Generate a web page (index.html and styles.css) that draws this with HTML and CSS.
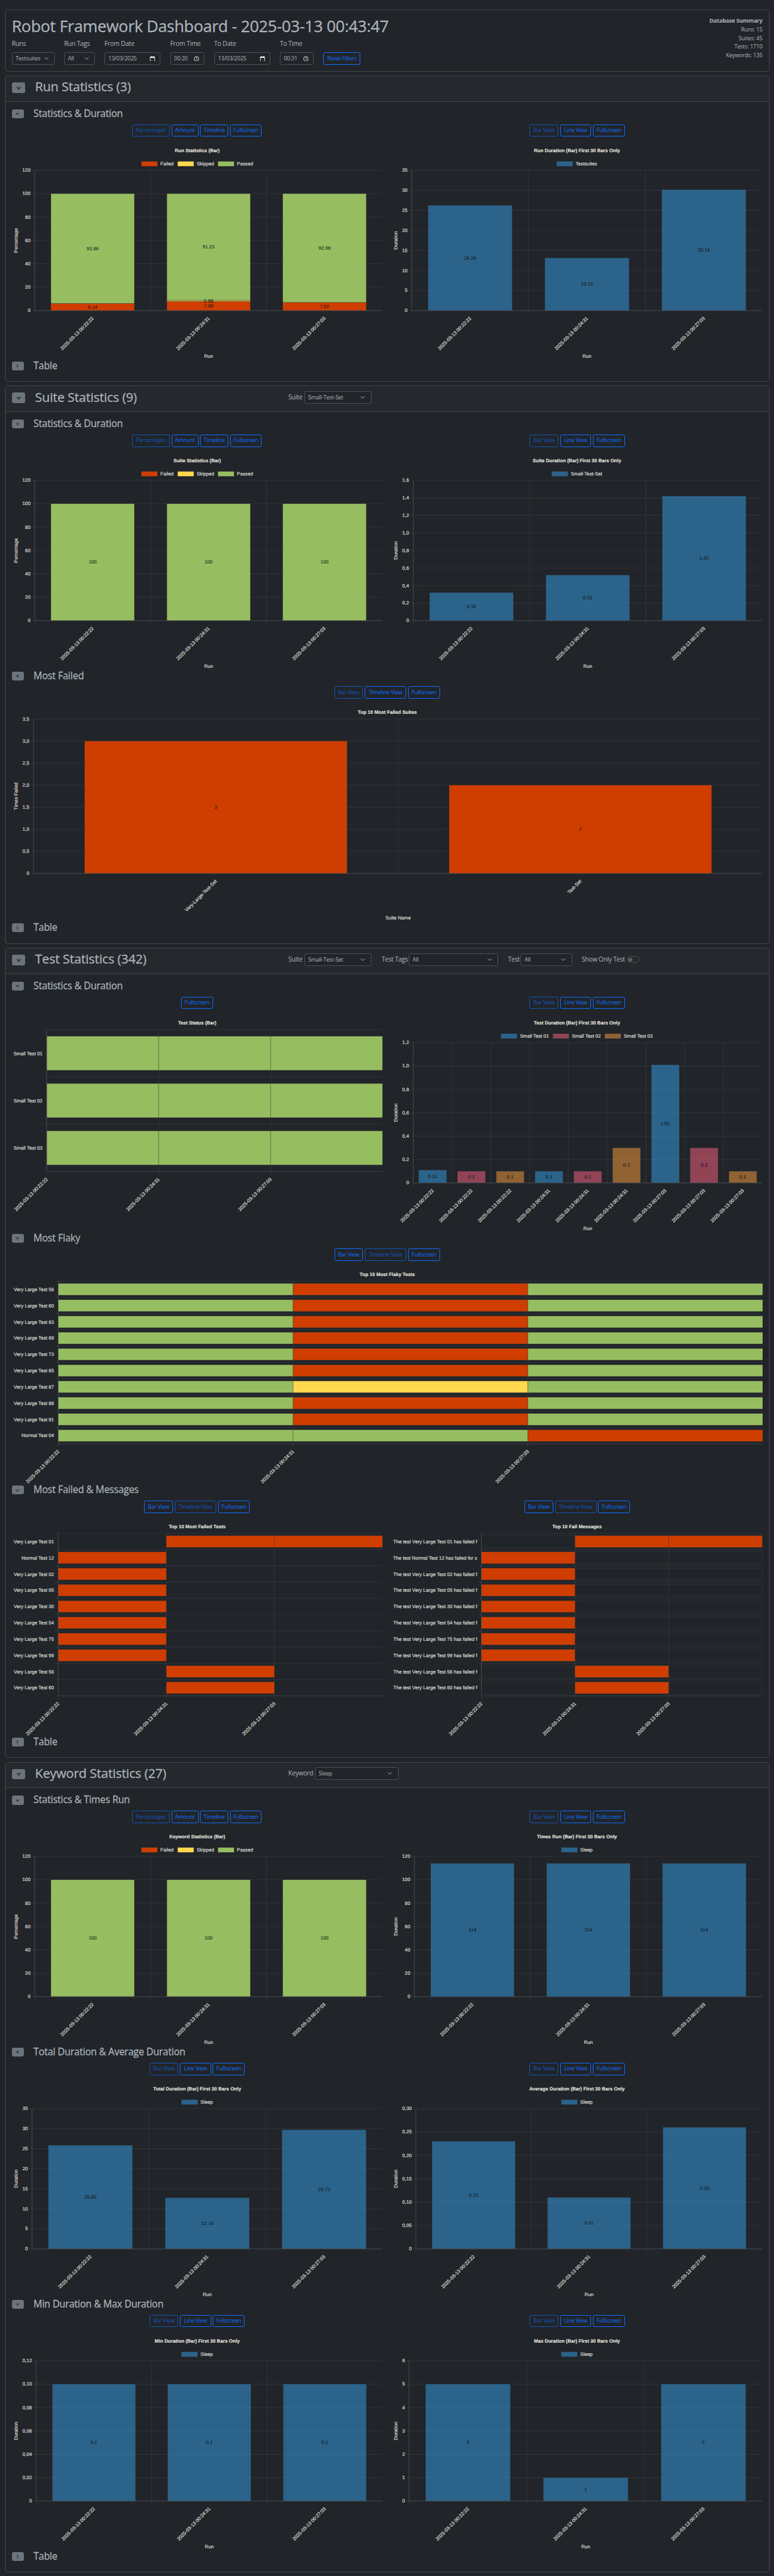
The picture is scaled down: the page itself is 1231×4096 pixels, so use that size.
FILE: index.html
```html
<!DOCTYPE html>
<html lang="en">
<head>
<meta charset="utf-8">
<title>Robot Framework Dashboard</title>
<link rel="stylesheet" href="styles.css">
</head>
<body>
<svg class="defs" width="0" height="0">
  <symbol id="down" viewBox="0 0 16 16"><path d="M3.5 4.5 8 11.5l4.500-7" fill="none" stroke="currentColor" stroke-width="1.700"/></symbol>
  <symbol id="right" viewBox="0 0 16 16"><path d="M5.500 2.500 10 8l-4.500 5.500" fill="none" stroke="currentColor" stroke-width="1.700"/></symbol>
  <symbol id="caret" viewBox="0 0 16 16"><path d="m2 5 6 6 6-6" fill="none" stroke="currentColor" stroke-width="2" stroke-linecap="round" stroke-linejoin="round"/></symbol>
  <symbol id="cal" viewBox="0 0 16 16"><path d="M2 2.500h12v12.500H2z" fill="none" stroke="#fff" stroke-width="1.500"/><path d="M2 2h12v3.500H2zM4 .5h1.500V3H4zM10.500.5H12V3h-1.500z" fill="#fff"/></symbol>
  <symbol id="clock" viewBox="0 0 16 16"><circle cx="8" cy="8" r="6.500" fill="none" stroke="#fff" stroke-width="1.500"/><path d="M8 3.500V8l3 2.500" fill="none" stroke="#fff" stroke-width="1.400"/></symbol>
</svg>
<div class="page">
  <header class="card top">
    <div class="filters">
      <h1>Robot Framework Dashboard - 2025-03-13 00:43:47</h1>
      <div class="fields">
        <div class="field w-runs"><label>Runs</label><div class="select">Testsuites<svg><use href="#caret"/></svg></div></div>
        <div class="field w-tags"><label>Run Tags</label><div class="select">All<svg><use href="#caret"/></svg></div></div>
        <div class="field w-date"><label>From Date</label><div class="select">13/03/2025<svg class="pick"><use href="#cal"/></svg></div></div>
        <div class="field w-time"><label>From Time</label><div class="select">00:20<svg class="pick"><use href="#clock"/></svg></div></div>
        <div class="field w-date"><label>To Date</label><div class="select">13/03/2025<svg class="pick"><use href="#cal"/></svg></div></div>
        <div class="field w-time2"><label>To Time</label><div class="select">00:31<svg class="pick"><use href="#clock"/></svg></div></div>
        <button class="btn w-reset">Reset Filters</button>
      </div>
    </div>
    <div class="summary"><b>Database Summary</b><span>Runs: 15</span><span>Suites: 45</span><span>Tests: 1710</span><span>Keywords: 135</span></div>
  </header>

  <section class="card">
    <div class="card-head"><i class="toggle"><svg><use href="#down"/></svg></i><h2>Run Statistics (3)</h2></div>
    <div class="group">
      <div class="sub"><i class="toggle"><svg><use href="#down"/></svg></i><h3>Statistics &amp; Duration</h3></div>
      <div class="row"><div class="col" data-chart="runStats"></div><div class="col" data-chart="runDuration"></div></div>
    </div>
    <div class="sub"><i class="toggle"><svg><use href="#right"/></svg></i><h3>Table</h3></div>
  </section>

  <section class="card">
    <div class="card-head"><i class="toggle"><svg><use href="#down"/></svg></i><h2>Suite Statistics (9)</h2>
      <div class="controls"><label class="l-suite">Suite</label><div class="select s-suite">Small-Test-Set<svg><use href="#caret"/></svg></div></div>
    </div>
    <div class="group">
      <div class="sub"><i class="toggle"><svg><use href="#down"/></svg></i><h3>Statistics &amp; Duration</h3></div>
      <div class="row"><div class="col" data-chart="suiteStats"></div><div class="col" data-chart="suiteDuration"></div></div>
    </div>
    <div class="group">
      <div class="sub"><i class="toggle"><svg><use href="#down"/></svg></i><h3>Most Failed</h3></div>
      <div class="row"><div class="col" data-chart="suiteFailed"></div></div>
    </div>
    <div class="sub"><i class="toggle"><svg><use href="#right"/></svg></i><h3>Table</h3></div>
  </section>

  <section class="card">
    <div class="card-head"><i class="toggle"><svg><use href="#down"/></svg></i><h2>Test Statistics (342)</h2>
      <div class="controls"><label class="l-suite">Suite</label><div class="select s-suite">Small-Test-Set<svg><use href="#caret"/></svg></div>
        <label class="l-tags">Test Tags</label><div class="select s-tags">All<svg><use href="#caret"/></svg></div>
        <label class="l-test">Test</label><div class="select s-test">All<svg><use href="#caret"/></svg></div>
        <label class="l-only">Show Only Test</label><span class="switch"></span></div>
    </div>
    <div class="group">
      <div class="sub"><i class="toggle"><svg><use href="#down"/></svg></i><h3>Statistics &amp; Duration</h3></div>
      <div class="row"><div class="col" data-chart="testStatus"></div><div class="col" data-chart="testDuration"></div></div>
    </div>
    <div class="group">
      <div class="sub"><i class="toggle"><svg><use href="#down"/></svg></i><h3>Most Flaky</h3></div>
      <div class="row"><div class="col" data-chart="flaky"></div></div>
    </div>
    <div class="group">
      <div class="sub"><i class="toggle"><svg><use href="#down"/></svg></i><h3>Most Failed &amp; Messages</h3></div>
      <div class="row"><div class="col" data-chart="testFailed"></div><div class="col" data-chart="messages"></div></div>
    </div>
    <div class="sub"><i class="toggle"><svg><use href="#right"/></svg></i><h3>Table</h3></div>
  </section>

  <section class="card">
    <div class="card-head"><i class="toggle"><svg><use href="#down"/></svg></i><h2>Keyword Statistics (27)</h2>
      <div class="controls"><label class="l-keyword">Keyword</label><div class="select s-keyword">Sleep<svg><use href="#caret"/></svg></div></div>
    </div>
    <div class="group">
      <div class="sub"><i class="toggle"><svg><use href="#down"/></svg></i><h3>Statistics &amp; Times Run</h3></div>
      <div class="row"><div class="col" data-chart="keywordStats"></div><div class="col" data-chart="timesRun"></div></div>
    </div>
    <div class="group">
      <div class="sub"><i class="toggle"><svg><use href="#down"/></svg></i><h3>Total Duration &amp; Average Duration</h3></div>
      <div class="row"><div class="col" data-chart="totalDuration"></div><div class="col" data-chart="avgDuration"></div></div>
    </div>
    <div class="group">
      <div class="sub"><i class="toggle"><svg><use href="#down"/></svg></i><h3>Min Duration &amp; Max Duration</h3></div>
      <div class="row"><div class="col" data-chart="minDuration"></div><div class="col" data-chart="maxDuration"></div></div>
    </div>
    <div class="sub"><i class="toggle"><svg><use href="#right"/></svg></i><h3>Table</h3></div>
  </section>
</div>
<script src="charts.js"></script>
</body>
</html>
```
FILE: styles.css
```css
html { background: #212429; }
body { margin: 0; background: #212429; color: #adb5bd; }
* { box-sizing: border-box; }
.defs { position: absolute; }

.page {
  zoom: 0.6413;
  width: 1920px;
  height: 6387px;
  padding: 24px 12px 0;
  overflow: hidden;
  font: 16px/24px "Open Sans", "Noto Sans", sans-serif;
}
label { letter-spacing: -0.031em; }
h1, h2, h3 { margin: 0; font-weight: 500; white-space: nowrap; letter-spacing: -0.012em; -webkit-text-stroke: 0.4px currentColor; }

.card {
  width: 1896px;
  height: 759px;
  margin-bottom: 10px;
  border: 1px solid #424649;
  border-radius: 6px;
}
.card:nth-of-type(2) { height: 1384px; }
.card:nth-of-type(3) { height: 2008.6px; }
.card:nth-of-type(4) { height: 2008.6px; }

.top {
  display: flex;
  justify-content: space-between;
  height: 153px;
  padding: 15px 15.5px 0;
}
h1 { font-size: 40px; line-height: 48px; margin: 1px 0 8px; letter-spacing: -0.0136em; }
.fields { display: flex; gap: 24px; align-items: flex-end; height: 63px; }
.field { display: flex; flex-direction: column; }
.field label { height: 33px; line-height: 24px; white-space: nowrap; }
.w-runs { width: 106px; }
.w-tags { width: 76px; }
.w-date { width: 139px; }
.w-time { width: 85px; }
.w-time2 { width: 84px; }
.btn.w-reset { width: 92px; }
.select {
  display: flex;
  align-items: center;
  justify-content: space-between;
  height: 31px;
  padding: 0 13px 0 8px;
  border: 1px solid #495057;
  border-radius: 4px;
  background: #212429;
  font-size: 14px;
  letter-spacing: -0.026em;
  white-space: nowrap;
}
.select svg { width: 12px; height: 12px; flex: none; }
.select svg.pick { width: 14px; height: 14px; margin-right: -2px; }

.summary { display: flex; flex-direction: column; font-size: 14px; line-height: 21.5px; text-align: right; letter-spacing: -0.023em; }

.btn {
  height: 31px;
  padding: 0;
  border: 1px solid #0d6efd;
  border-radius: 4px;
  background: none;
  color: #0d6efd;
  font: 14px/20px "Open Sans", "Noto Sans", sans-serif;
  letter-spacing: -0.034em;
  white-space: nowrap;
}
.btn.off { opacity: 0.65; }

.card-head {
  display: flex;
  align-items: center;
  height: 63.5px;
  margin-bottom: 19px;
  padding: 0 15.5px 4px;
  border-bottom: 1px solid #424649;
  border-radius: 5px 5px 0 0;
  background: #25282d;
}
.card-head .toggle { width: 34px; height: 26px; }
.card-head h2 { width: 628px; margin: -4px 0 0 24px; font-size: 32px; line-height: 40px; }
.toggle {
  display: flex;
  align-items: center;
  justify-content: center;
  flex: none;
  width: 30px;
  height: 22px;
  border-radius: 5px;
  background: #6c757d;
  color: #000;
}
.toggle svg { width: 12px; height: 12px; }
.card-head .toggle svg { width: 15px; height: 15px; }

.controls { display: flex; align-items: center; margin-top: -3px; }
.controls label { white-space: nowrap; }
.l-suite { width: 39.5px; }
.l-tags { width: 67px; margin-left: 25px; }
.l-test { width: 31.5px; margin-left: 24.5px; }
.l-only { width: 112px; margin-left: 24px; }
.l-keyword { width: 65.5px; }
.s-suite { width: 167px; padding-right: 14px; }
.s-tags { width: 222px; padding-right: 14px; }
.s-test { width: 127px; padding-right: 14px; }
.s-keyword { width: 208px; padding-right: 14px; }
.switch { width: 32px; height: 16px; padding: 2px; border: 1px solid #495057; border-radius: 8px; }
.switch::before { content: ""; display: block; width: 10px; height: 10px; border-radius: 50%; background: #5b6064; }

.sub { display: flex; align-items: center; height: 22px; padding: 0 15.5px; }
.sub h3 { margin-left: 24px; font-size: 24px; line-height: 28px; }
.group { height: 624.87px; }
.row { display: flex; gap: 24px; padding: 15px 15.5px 0; }
.col { flex: 1; min-width: 0; }
.buttons { display: flex; justify-content: center; gap: 4.4px; margin-bottom: 8px; }
.Percentages { width: 93px; }
.Amount { width: 67px; }
.Timeline { width: 69.5px; }
.Fullscreen { width: 79px; }
.Bar { width: 71.5px; }
.Line { width: 77px; }
.TimelineView { width: 103px; }

.chart { display: block; width: 100%; height: 546px; overflow: visible; }
.chart text { font: 12px "Liberation Sans", Arial, sans-serif; letter-spacing: 0; fill: #dddcd6; stroke: #dddcd6; stroke-width: 0.3px; text-rendering: geometricPrecision; }
.chart .title { font-weight: bold; fill: #e3e2dc; }
.chart .value { fill: #0c0f12; stroke: none; }
.grid { stroke: #3a3d41; stroke-width: 1; fill: none; }
.axis { stroke: #505458; stroke-width: 1; }
.outline { stroke: #33373a; stroke-width: 1; fill: none; }
.passed { fill: #97bd61; }
.failed { fill: #cf3e00; }
.skipped { fill: #ffd84f; }
.blue { fill: rgba(54, 162, 235, 0.5); }
.pink { fill: rgba(255, 99, 132, 0.5); }
.orange { fill: rgba(255, 159, 64, 0.5); }
.bar { stroke: #33373a; stroke-opacity: 0.55; stroke-width: 1; }
```
FILE: charts.js
```js
const RUNS = ["2025-03-13 00:22:22", "2025-03-13 00:24:31", "2025-03-13 00:27:03"];
const STATUS_BTNS = ["-Percentages", "Amount", "Timeline", "Fullscreen"];
const BAR_BTNS = ["-Bar View", "Line View", "Fullscreen"];
const TIMELINE_BTNS = ["Bar View", "-Timeline View", "Fullscreen"];
const STATUS_LEGEND = [["failed", "Failed", 34], ["skipped", "Skipped", 44], ["passed", "Passed", 40]];
const PCT = ["0", "20", "40", "60", "80", "100", "120"];
const FIVES = ["0", "5", "10", "15", "20", "25", "30", "35"];

const status = (title, stacks) => ({ buttons: STATUS_BTNS, title, legend: STATUS_LEGEND, left: 56.4, ticks: PCT, max: 120, yTitle: "Percentage", xTitle: "Run", labels: RUNS, stacks });
const bars = (title, name, nameWidth, left, ticks, max, values) => ({ buttons: BAR_BTNS, title: title + " (Bar) First 30 Bars Only", legend: [["blue", name, nameWidth]], left, ticks, max, yTitle: "Duration", xTitle: "Run", labels: RUNS, stacks: values.map(v => [["blue", v]]) });
const full = [["passed", 100]];
const lt = n => "Very Large Test " + n;
const msg = n => "The test Very Large Test " + n + " has failed f";
const FAIL_ROWS = [".FF", "F..", "F..", "F..", "F..", "F..", "F..", "F..", ".F.", ".F."];

const charts = {
  runStats: status("Run Statistics (Bar)", [
    [["failed", 6.14], ["passed", 93.86]],
    [["failed", 7.89], ["skipped", 0.88], ["passed", 91.23]],
    [["failed", 7.02], ["passed", 92.98]]]),
  runDuration: bars("Run Duration", "Testsuites", 54, 49.6, FIVES, 35, [26.24, 13.15, 30.14]),
  suiteStats: status("Suite Statistics (Bar)", [full, full, full]),
  suiteDuration: bars("Suite Duration", "Small-Test-Set", 78, 53.4, ["0", "0,2", "0,4", "0,6", "0,8", "1,0", "1,2", "1,4", "1,6"], 1.6, [0.32, 0.52, 1.42]),
  suiteFailed: { buttons: ["-Bar View", "Timeline View", "Fullscreen"], title: "Top 10 Most Failed Suites", width: 1862, left: 53.5, bottom: 425.5, ticks: ["0", "0,5", "1,0", "1,5", "2,0", "2,5", "3,0", "3,5"], max: 3.5, yTitle: "Times Failed", xTitle: "Suite Name", labels: ["Very-Large-Test-Set", "Test-Set"], stacks: [[["failed", 3]], [["failed", 2]]] },
  testStatus: { buttons: ["Fullscreen"], title: "Test Status (Bar)", rows: ["PPP", "PPP", "PPP"], names: ["Small Test 01", "Small Test 02", "Small Test 03"], left: 86.1, bottom: 394.2 },
  testDuration: { buttons: BAR_BTNS, title: "Test Duration (Bar) First 30 Bars Only", legend: [["blue", "Small Test 01", 72.7], ["pink", "Small Test 02", 72.7], ["orange", "Small Test 03", 72.7]], left: 53.4, ticks: ["0", "0,2", "0,4", "0,6", "0,8", "1,0", "1,2"], max: 1.2, yTitle: "Duration", xTitle: "Run", labels: RUNS.flatMap(r => [r, r, r]), stacks: [0.11, 0.1, 0.1, 0.1, 0.1, 0.3, 1.01, 0.3, 0.1].map((v, i) => [[["blue", "pink", "orange"][i % 3], v]]) },
  flaky: { buttons: TIMELINE_BTNS, title: "Top 10 Most Flaky Tests", width: 1862, left: 114.8, bottom: 445.4, rows: ["PFP", "PFP", "PFP", "PFP", "PFP", "PFP", "PSP", "PFP", "PFP", "PPF"], names: [56, 60, 63, 69, 73, 85, 87, 88, 91].map(lt).concat("Normal Test 04") },
  testFailed: { buttons: TIMELINE_BTNS, title: "Top 10 Most Failed Tests", left: 114.7, bottom: 445.4, rows: FAIL_ROWS, names: [lt("01"), "Normal Test 12"].concat(["02", "05", "30", "54", "75", "99", "56", "60"].map(lt)) },
  messages: { buttons: TIMELINE_BTNS, title: "Top 10 Fail Messages", left: 222.4, bottom: 445.4, outline: true, rows: FAIL_ROWS, names: [msg("01"), "The test Normal Test 12 has failed for s"].concat(["02", "05", "30", "54", "75", "99", "56", "60"].map(msg)) },
  keywordStats: status("Keyword Statistics (Bar)", [full, full, full]),
  timesRun: bars("Times Run", "Sleep", 31, 56.4, PCT, 120, [114, 114, 114]),
  totalDuration: bars("Total Duration", "Sleep", 31, 49.8, FIVES, 35, [25.85, 12.74, 29.73]),
  avgDuration: bars("Average Duration", "Sleep", 31, 60, ["0", "0,05", "0,10", "0,15", "0,20", "0,25", "0,30"], 0.3, [0.23, 0.11, 0.26]),
  minDuration: bars("Min Duration", "Sleep", 31, 60, ["0", "0,02", "0,04", "0,06", "0,08", "0,10", "0,12"], 0.12, [0.1, 0.1, 0.1]),
  maxDuration: bars("Max Duration", "Sleep", 31, 43.2, ["0", "1", "2", "3", "4", "5", "6"], 6, [5, 1, 5])
};

const line = (cls, x1, y1, x2, y2) => `<line class="${cls}" x1="${x1}" y1="${y1}" x2="${x2}" y2="${y2}"/>`;
const rect = (cls, x, y, w, h) => `<rect class="${cls}" x="${x}" y="${y}" width="${w}" height="${h}"/>`;
const text = (s, x, y, anchor = "middle", cls = "") => `<text class="${cls}" x="${x}" y="${y + 4.3}" text-anchor="${anchor}">${s}</text>`;
const slanted = (s, x, y) => `<text transform="translate(${x + 0.5} ${y}) rotate(-45)" text-anchor="end" y="4.3">${s}</text>`;

function draw(c) {
  const W = c.width || 919, L = c.left, R = W, T = c.legend ? 74.5 : 42.4, B = c.bottom || 422.4;
  let s = text(c.title, W / 2, 24.7, "middle", "title");
  if (c.legend) {
    let x = (W - c.legend.reduce((a, l) => a + 47 + l[2], 0) - 9 * (c.legend.length - 1)) / 2;
    for (const [cls, name, w] of c.legend) {
      s += rect("bar " + cls, x, 52.5, 40, 12) + text(name, x + 47, 58.2, "start");
      x += 56 + w;
    }
  }
  if (c.rows) {
    const rh = (B - T) / c.rows.length, cw = (R - L) / 3;
    c.rows.forEach((row, i) => {
      const y = T + rh * i;
      s += line("grid", L - 8, y, R, y) + text(c.names[i], L - 10.5, y + rh / 2, "end");
    });
    for (let i = 0; i < 3; i++) s += line("grid", L + cw * i, T, L + cw * i, B + 8) + slanted(RUNS[i], L + cw * i, B + 17);
    c.rows.forEach((row, i) => {
      const y = T + rh * (i + 0.14), h = rh * 0.72;
      if (c.outline) s += rect("outline", L, y, R - L, h);
      [...row].forEach((k, j) => {
        if (k !== ".") s += rect("bar " + { P: "passed", F: "failed", S: "skipped" }[k], L + cw * j, y, cw, h);
      });
    });
  } else {
    const n = c.labels.length, cw = (R - L) / n, H = B - T, steps = c.ticks.length - 1;
    c.ticks.forEach((t, i) => {
      const y = B - H * i / steps;
      s += line("grid", L - 8, y, R, y) + text(t, L - 10.5, y - 0.5, "end");
    });
    for (let i = 0; i < n; i++) s += line("grid", L + cw * i, T, L + cw * i, B + 8);
    c.stacks.forEach((stack, i) => {
      let base = B, x = L + cw * (i + 0.14), labels = "";
      for (const [cls, v] of stack) {
        const h = H * v / c.max;
        base -= h;
        s += rect("bar " + cls, x, base, cw * 0.72, h);
        labels += text(v, x + cw * 0.36, base + h / 2 - 0.5, "middle", "value");
      }
      s += labels + slanted(c.labels[i], L + cw * (i + 0.5), B + 17);
    });
    s += text(c.xTitle, (L + R) / 2, 535.7);
    s += `<text transform="translate(10.5 ${(T + B) / 2}) rotate(-90)" text-anchor="middle" y="4.3">${c.yTitle}</text>`;
  }
  s += line("axis", L, T, L, B) + line("axis", L, B, R, B);
  const buttons = c.buttons.map(b => {
    const label = b.replace("-", "");
    const size = label === "Timeline View" ? "TimelineView" : label.split(" ")[0];
    return `<button class="btn ${size}${b[0] === "-" ? " off" : ""}">${label}</button>`;
  }).join("");
  return `<div class="buttons">${buttons}</div><svg class="chart" viewBox="0 0 ${W} 546" preserveAspectRatio="none">${s}</svg>`;
}

document.querySelectorAll("[data-chart]").forEach(el => { el.innerHTML = draw(charts[el.dataset.chart]); });
```
